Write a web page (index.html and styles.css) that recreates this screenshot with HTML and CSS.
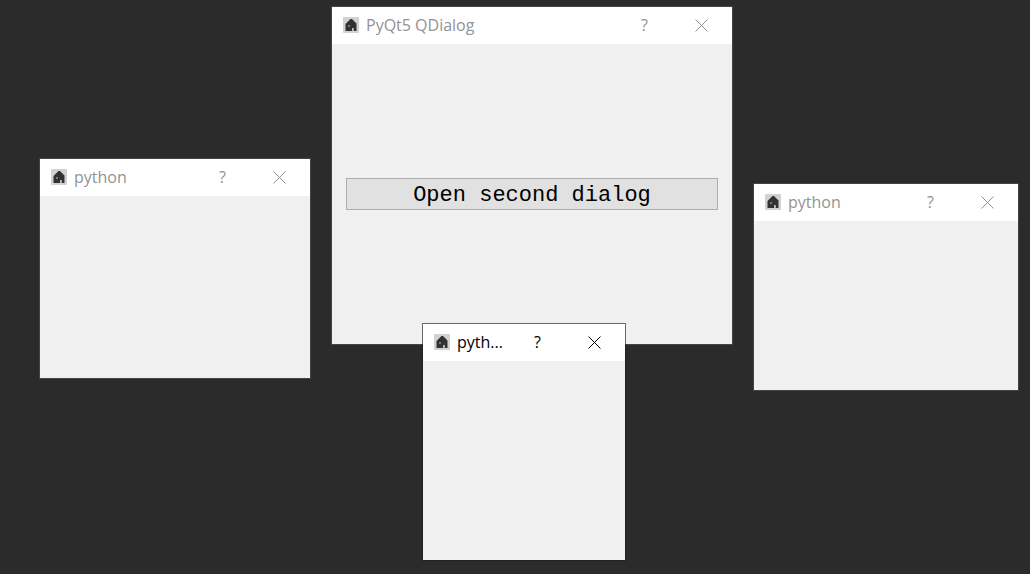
FILE: index.html
```html
<!DOCTYPE html>
<html lang="en">
<head>
<meta charset="utf-8">
<title>PyQt5 QDialog</title>
<link rel="stylesheet" href="styles.css">
</head>
<body>
<svg class="defs" aria-hidden="true">
  <symbol id="app" viewBox="0 0 16 16">
    <rect width="16" height="16" rx="1" fill="#d2d2d2"/>
    <path d="M7.500 2h1.500l4.500 4.500v7.500h-2.500v-3h-2v3H2.500V7z" fill="#303234"/>
    <path d="M5 8h2v2H5z" fill="#75787a"/>
    <path d="M9.500 11h1.500v3H9.500z" fill="#a4a4a4"/>
  </symbol>
  <symbol id="close" viewBox="0 0 13 13">
    <path d="M.5 .5l12 12M12.500 .5l-12 12" fill="none" stroke="currentColor" stroke-width="1"/>
  </symbol>
</svg>
<main class="desktop">
  <section class="window window-main">
    <header class="titlebar">
      <svg class="app-icon" aria-hidden="true"><use href="#app"/></svg>
      <h1 class="title">PyQt5 QDialog</h1>
      <button class="control" type="button" aria-label="Help">?</button>
      <button class="control" type="button" aria-label="Close"><svg class="close-icon"><use href="#close"/></svg></button>
    </header>
    <div class="content"><button class="open" type="button">Open second dialog</button></div>
  </section>
  <section class="window window-left">
    <header class="titlebar">
      <svg class="app-icon" aria-hidden="true"><use href="#app"/></svg>
      <h2 class="title">python</h2>
      <button class="control" type="button" aria-label="Help">?</button>
      <button class="control" type="button" aria-label="Close"><svg class="close-icon"><use href="#close"/></svg></button>
    </header>
    <div class="content"></div>
  </section>
  <section class="window window-right">
    <header class="titlebar">
      <svg class="app-icon" aria-hidden="true"><use href="#app"/></svg>
      <h2 class="title">python</h2>
      <button class="control" type="button" aria-label="Help">?</button>
      <button class="control" type="button" aria-label="Close"><svg class="close-icon"><use href="#close"/></svg></button>
    </header>
    <div class="content"></div>
  </section>
  <section class="window window-front active">
    <header class="titlebar">
      <svg class="app-icon" aria-hidden="true"><use href="#app"/></svg>
      <h2 class="title">pyth...</h2>
      <button class="control" type="button" aria-label="Help">?</button>
      <button class="control" type="button" aria-label="Close"><svg class="close-icon"><use href="#close"/></svg></button>
    </header>
    <div class="content"></div>
  </section>
</main>
</body>
</html>
```
FILE: styles.css
```css
* {
  box-sizing: border-box;
}

body {
  margin: 0;
  background: #2b2b2b;
  font-family: "Open Sans", "Noto Sans", sans-serif;
}

.defs {
  position: absolute;
  width: 0;
  height: 0;
}

.desktop {
  position: relative;
  min-height: 100vh;
  overflow: hidden;
}

.window {
  position: absolute;
  display: flex;
  flex-direction: column;
  border: 1px solid #434445;
  background: #f0f0f0;
  background-clip: padding-box;
  color: #939393;
}

.window-main {
  left: 331px;
  top: 6px;
  width: 402px;
  height: 339px;
}

.window-left {
  left: 39px;
  top: 158px;
  width: 272px;
  height: 221px;
}

.window-right {
  left: 753px;
  top: 183px;
  width: 266px;
  height: 208px;
}

.window-front {
  left: 422px;
  top: 323px;
  width: 204px;
  height: 238px;
}

.active {
  border-color: rgba(28, 28, 28, 0.64);
  color: #000;
}

.titlebar {
  display: flex;
  align-items: center;
  height: 37px;
  padding: 0 2px 1px 11px;
  background: #fff;
}

.app-icon {
  flex: none;
  width: 16px;
  height: 16px;
  margin-right: 7px;
}

.title {
  flex: 1;
  margin: 0;
  overflow: hidden;
  font-size: 16px;
  font-weight: 400;
  line-height: 24px;
  white-space: nowrap;
}

.control {
  display: flex;
  flex: none;
  align-items: center;
  align-self: flex-start;
  justify-content: center;
  width: 57px;
  height: 37px;
  padding: 0;
  border: 0;
  background: transparent;
  color: inherit;
  font: 16px/25px "Open Sans", "Noto Sans", sans-serif;
}

.close-icon {
  width: 13px;
  height: 13px;
}

.content {
  display: flex;
  flex: 1;
  align-items: center;
  padding: 0 14px;
}

.open {
  flex: 1;
  height: 32px;
  padding: 4px 0 0;
  border: 1px solid #adadad;
  background: #e1e1e1;
  color: #000;
  font: 22px/26px "Liberation Mono", monospace;
}
```
